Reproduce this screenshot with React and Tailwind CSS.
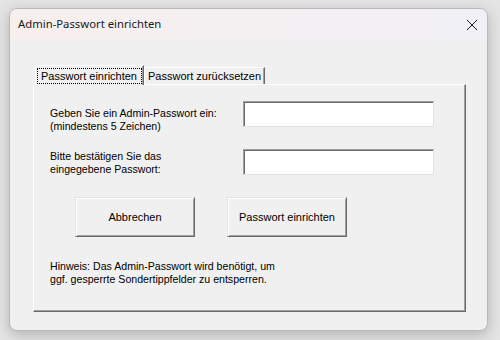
import { useState } from 'react';

const ui = { fontFamily: '"Liberation Sans", Arial, sans-serif' };
const title = { fontFamily: '"Noto Sans", "Liberation Sans", sans-serif' };

function Field() {
  return (
    <input
      type="password"
      className="w-[191px] h-[26px] shrink-0 bg-white border-t border-l border-[#a0a0a0] border-r border-b border-r-[#e3e3e3] border-b-[#e3e3e3] shadow-[inset_1px_1px_0_#696969] outline-none"
    />
  );
}

function Btn({ children }) {
  return (
    <button className="w-[120px] h-[40px] bg-[#f0f0f0] border border-t-[#e3e3e3] border-l-[#e3e3e3] border-r-[#696969] border-b-[#696969] shadow-[inset_1px_1px_0_#ffffff,inset_-1px_-1px_0_#a0a0a0] text-[11px] text-black">
      {children}
    </button>
  );
}

export default function App() {
  const [tab, setTab] = useState(0);

  return (
    <div className="w-[500px] h-[340px] bg-[#e4e4e4] pl-[9px] pt-[8px]" style={ui}>
      <div className="w-[479px] h-[323px] rounded-[8px] border border-[#b9b9b9] shadow-[0_4px_14px_rgba(0,0,0,0.22)] overflow-hidden flex flex-col bg-[#f0f0f0]">
        <div className="h-[31px] shrink-0 flex items-center justify-between pl-[8px] pr-[9px] bg-gradient-to-r from-[#f7efed] to-[#f1f0f6]">
          <span className="text-[11.3px] text-[#1a1a1a]" style={title}>Admin-Passwort einrichten</span>
          <svg width="12" height="12" viewBox="0 0 12 12" className="mt-[1px]">
            <path d="M1 1 L11 11 M11 1 L1 11" stroke="#1a1a1a" strokeWidth="1" />
          </svg>
        </div>

        <div className="flex-1 pl-[23px] pt-[25px]">
          <div className="flex items-end ml-[2px] h-[19px] text-[11px] text-black whitespace-nowrap">
            <button
              onClick={() => setTab(0)}
              className="relative z-10 h-[20px] -mb-px w-[109px] bg-[#f0f0f0] border-t border-l border-white border-r border-r-[#696969] shadow-[inset_-1px_0_0_#a0a0a0] px-[1px] pt-[1px] text-left"
            >
              <span className="block border border-dotted border-black h-[16px] leading-[14px] px-[3px]">Passwort einrichten</span>
            </button>
            <button
              onClick={() => setTab(1)}
              className="h-[17px] w-[121px] border-t border-l border-white border-r border-r-[#696969] shadow-[inset_-1px_0_0_#a0a0a0] pl-[3px] text-left leading-[15px]"
            >
              Passwort zurücksetzen
            </button>
          </div>

          <div className="w-[433px] h-[228px] border-t border-l border-white border-r border-b border-r-[#696969] border-b-[#696969] shadow-[inset_-1px_-1px_0_#a0a0a0] pl-[16px] text-[10.6px] leading-[13px] text-black">
            <div className="flex h-[26px] mt-[16px]">
              <div className="w-[193px] pt-[6px] whitespace-nowrap">
                Geben Sie ein Admin-Passwort ein:
                <br />
                (mindestens 5 Zeichen)
              </div>
              <Field />
            </div>
            <div className="flex h-[26px] mt-[22px]">
              <div className="w-[193px] pt-[1px] whitespace-nowrap">
                Bitte bestätigen Sie das
                <br />
                eingegebene Passwort:
              </div>
              <Field />
            </div>
            <div className="flex gap-[32px] mt-[22px] ml-[25px]">
              <Btn>Abbrechen</Btn>
              <Btn>Passwort einrichten</Btn>
            </div>
            <p className="mt-[23px] whitespace-nowrap">
              Hinweis: Das Admin-Passwort wird benötigt, um
              <br />
              ggf. gesperrte Sondertippfelder zu entsperren.
            </p>
          </div>
        </div>
      </div>
    </div>
  );
}
